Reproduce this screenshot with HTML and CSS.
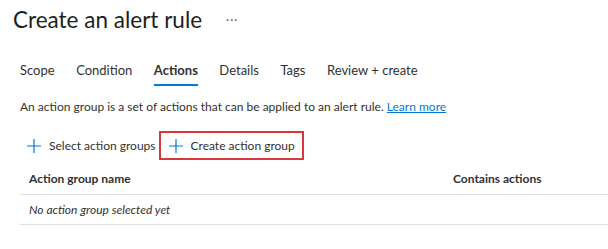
FILE: index.html
```html
<!DOCTYPE html>
<html lang="en">
<head>
    <meta charset="UTF-8">
    <title>Create an alert rule</title>
    <link rel="stylesheet" href="styles.css">
</head>
<body>
    <div class="header">
        <h1>Create an alert rule</h1>
        <span class="more">&middot;&middot;&middot;</span>
    </div>

    <!-- abas do assistente -->
    <nav class="tabs">
        <a class="tab">Scope</a>
        <a class="tab">Condition</a>
        <a class="tab active">Actions</a>
        <a class="tab">Details</a>
        <a class="tab">Tags</a>
        <a class="tab">Review + create</a>
    </nav>

    <p class="desc">An action group is a set of actions that can be applied to an alert rule. <a class="link" href="#">Learn more</a></p>

    <div class="toolbar">
        <button class="cmd">
            <svg width="14" height="14" viewBox="0 0 14 14"><path d="M7 0v14M0 7h14" stroke="#0078d4" stroke-width="1.2" fill="none"/></svg>
            Select action groups
        </button>
        <button class="cmd highlight">
            <svg width="14" height="14" viewBox="0 0 14 14"><path d="M7 0v14M0 7h14" stroke="#0078d4" stroke-width="1.2" fill="none"/></svg>
            Create action group
        </button>
    </div>

    <table>
        <thead>
            <tr>
                <th class="col-name">Action group name</th>
                <th>Contains actions</th>
            </tr>
        </thead>
        <tbody>
            <tr>
                <td class="empty" colspan="2">No action group selected yet</td>
            </tr>
        </tbody>
    </table>
</body>
</html>
```

FILE: styles.css
```css
/* Estilo global */
body {
    font-family: Lato, "Noto Sans", sans-serif;
    color: #323130;
    background-color: #fff;
    margin: 0;
    padding: 0;
}

/* cabeçalho */
.header {
    display: flex;
    align-items: center;
    padding: 2px 0 0 13px;
    height: 34px;
}

h1 {
    font-size: 22.5px;
    font-weight: 400;
    margin: 0;
    color: #201f1e;
}

.more {
    margin-left: 24px;
    font-size: 12px;
    color: #605e5c;
    letter-spacing: 1px;
}

/* abas */
.tabs {
    display: flex;
    gap: 21.5px;
    padding: 26px 0 0 20px;
}

.tab {
    font-size: 13px;
    padding-bottom: 6px;
    border-bottom: 2px solid transparent;
}

.tab.active {
    font-weight: 700;
    border-bottom-color: #0078d4;
}

.desc {
    font-size: 12px;
    margin: 13px 0 0 20px;
}

.link {
    color: #0078d4;
}

/* barra de comandos */
.toolbar {
    display: flex;
    margin: 17px 0 0 20px;
}

.cmd {
    display: flex;
    align-items: center;
    gap: 8px;
    font-family: inherit;
    font-size: 12px;
    color: #323130;
    background: none;
    border: 2px solid transparent;
    padding: 0 1px 0 5px;
    height: 29px;
}

.cmd.highlight {
    border-color: #d9363e;
    padding: 0 7px 0 8px;
}

/* tabela */
table {
    width: calc(100% - 20px);
    margin-left: 20px;
    margin-top: 6px;
    border-collapse: collapse;
    font-size: 12px;
}

th {
    text-align: left;
    font-weight: 700;
    padding: 5px 9px 8px;
    border-bottom: 1px solid #e1dfdd;
}

.col-name {
    width: 406px;
}

td {
    padding: 7px 9px 7px;
    border-bottom: 1px solid #e1dfdd;
}

.empty {
    font-style: italic;
}
```
